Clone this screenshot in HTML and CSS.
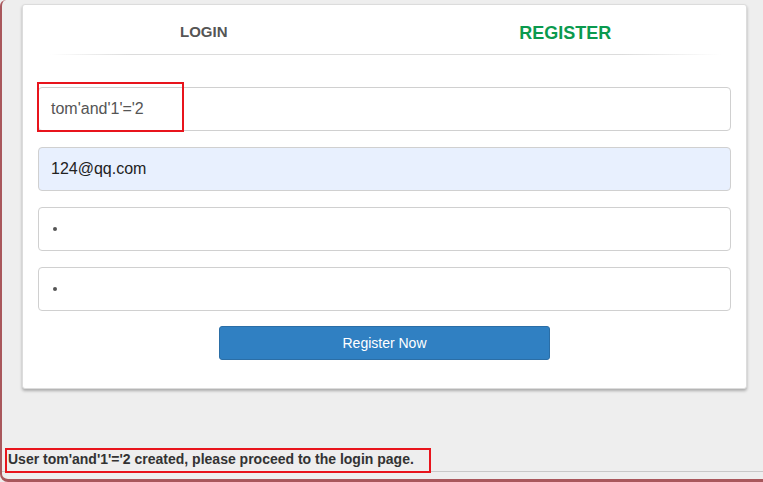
FILE: index.html
```html
<!DOCTYPE html>
<html>
<head>
<meta charset="utf-8">
<link rel="stylesheet" href="styles.css">
</head>
<body>
<div class="frame">
  <div class="card">
    <div class="tabs">
      <div class="tab tab-login">LOGIN</div>
      <div class="tab tab-register">REGISTER</div>
    </div>
    <div class="divider"></div>
    <form class="form">
      <div class="field">
        <div class="input">tom'and'1'='2</div>
        <div class="mark mark-user"></div>
      </div>
      <div class="field"><div class="input input-autofill">124@qq.com</div></div>
      <div class="field"><div class="input input-pass"><span class="dot"></span></div></div>
      <div class="field"><div class="input input-pass"><span class="dot"></span></div></div>
      <div class="actions"><button type="button" class="btn">Register Now</button></div>
    </form>
  </div>
  <div class="spacer"></div>
  <div class="status">
    <span class="msg">User tom'and'1'='2 created, please proceed to the login page.</span>
    <div class="mark mark-msg"></div>
  </div>
</div>
</body>
</html>
```

FILE: styles.css
```css
html, body {
  margin: 0;
  padding: 0;
}
body {
  background: #eeeeee;
  font-family: "Liberation Sans", Arial, sans-serif;
  width: 763px;
  height: 482px;
  overflow: hidden;
}
.frame {
  box-sizing: border-box;
  height: 482px;
  border-left: 2px solid #a9575c;
  border-bottom: 3px solid #a9575c;
  border-bottom-left-radius: 8px;
  border-top-left-radius: 6px;
  display: flex;
  flex-direction: column;
}
.card {
  margin: 4px 16px 0 20px;
  height: 385px;
  box-sizing: border-box;
  background: #fff;
  border-radius: 3px;
  border: 1px solid #dcdcdc;
  box-shadow: 0 2px 3px rgba(0,0,0,0.28);
  padding: 0 15px;
}
.tabs {
  display: flex;
  height: 49px;
  margin: 0 -15px;
}
.tab {
  flex: 1;
  text-align: center;
  font-weight: bold;
}
.tab-login {
  font-size: 15px;
  color: #555;
  padding-top: 18px;
}
.tab-register {
  font-size: 18px;
  color: #0a9a4e;
  padding-top: 18px;
}
.divider {
  height: 1px;
  margin: 0 10px 0 12px;
  background: linear-gradient(to right, rgba(221,221,221,0), #dcdcdc 12%, #dcdcdc 85%, rgba(221,221,221,0));
}
.form {
  padding-top: 32px;
  display: flex;
  flex-direction: column;
  gap: 16px;
}
.field {
  position: relative;
}
.input {
  box-sizing: border-box;
  height: 44px;
  border: 1px solid #d0d0d0;
  border-radius: 4px;
  padding: 0 12px;
  font-size: 16px;
  color: #555;
  display: flex;
  align-items: center;
  background: #fff;
}
.input-autofill {
  background: #e8f0fe;
  color: #222;
}
.dot {
  width: 4px;
  height: 4px;
  border-radius: 50%;
  background: #555;
  margin-left: 2px;
}
.actions {
  display: flex;
  justify-content: center;
  margin-top: -1px;
}
.btn {
  width: 331px;
  height: 34px;
  background: #3080c2;
  border: 1px solid #2b6ea6;
  border-radius: 3px;
  color: #fff;
  font-family: "Liberation Sans", Arial, sans-serif;
  font-size: 14px;
  padding: 0;
}
.spacer {
  flex: 1;
}
.status {
  position: relative;
  border-bottom: 1px solid #c8c8c8;
  padding: 0 0 3px 6px;
  margin-bottom: 7px;
}
.msg {
  display: block;
  font-size: 14px;
  font-weight: bold;
  color: #333;
  line-height: 17px;
}
.mark {
  position: absolute;
  border: 2px solid #e8141c;
  box-sizing: border-box;
}
.mark-user {
  left: -1px;
  top: -5px;
  width: 147px;
  height: 50px;
}
.mark-msg {
  left: 3px;
  top: -3px;
  width: 426px;
  height: 25px;
}
```
